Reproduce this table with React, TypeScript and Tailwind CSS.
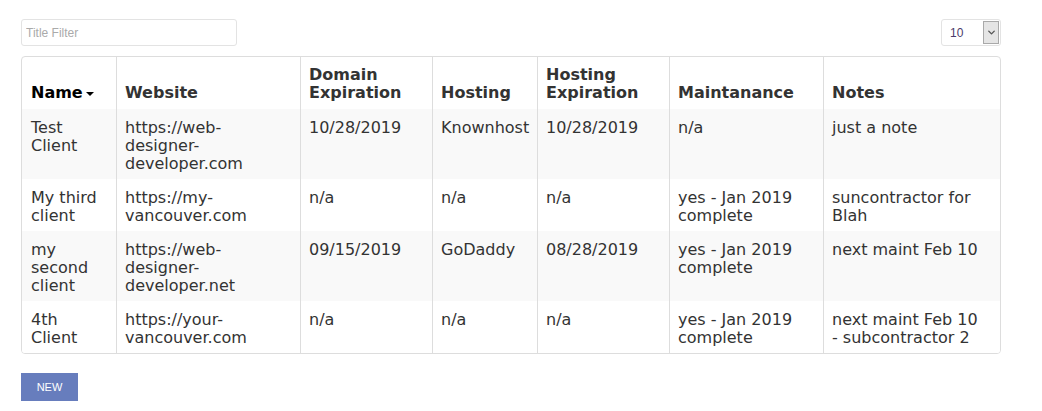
import { ChevronDown } from 'lucide-react';

interface Client {
  name: string;
  website: string;
  domainExp: string;
  hosting: string;
  hostingExp: string;
  maint: string;
  notes: string;
}

const CLIENTS: Client[] = [
  {
    name: 'Test Client',
    website: 'https://web-designer-developer.com',
    domainExp: '10/28/2019',
    hosting: 'Knownhost',
    hostingExp: '10/28/2019',
    maint: 'n/a',
    notes: 'just a note',
  },
  {
    name: 'My third client',
    website: 'https://my-vancouver.com',
    domainExp: 'n/a',
    hosting: 'n/a',
    hostingExp: 'n/a',
    maint: 'yes - Jan 2019 complete',
    notes: 'suncontractor for Blah',
  },
  {
    name: 'my second client',
    website: 'https://web-designer-developer.net',
    domainExp: '09/15/2019',
    hosting: 'GoDaddy',
    hostingExp: '08/28/2019',
    maint: 'yes - Jan 2019 complete',
    notes: 'next maint Feb 10',
  },
  {
    name: '4th Client',
    website: 'https://your-vancouver.com',
    domainExp: 'n/a',
    hosting: 'n/a',
    hostingExp: 'n/a',
    maint: 'yes - Jan 2019 complete',
    // wraps before the dash in the original
    notes: 'next maint Feb 10\n- subcontractor 2',
  },
];

const HEADERS = ['Website', 'Domain Expiration', 'Hosting', 'Hosting Expiration', 'Maintanance', 'Notes'];

const GRID = 'grid grid-cols-[94px_184px_132px_105px_132px_154px_177px]';

export default function App() {
  return (
    <div
      className="min-h-[411px] bg-white pt-[19px] pl-[21px] text-[#333]"
      style={{ fontFamily: '"DejaVu Sans", Verdana, sans-serif' }}
    >
      <div className="flex w-[980px] items-start justify-between">
        <input
          type="text"
          placeholder="Title Filter"
          className="h-[27px] w-[216px] rounded-[3px] border border-[#e3e3e3] px-[4px] text-[12px] text-[#333] outline-none placeholder:text-[#aaa]"
          style={{ fontFamily: '"Liberation Sans", Arial, sans-serif' }}
        />
        <div
          className="flex h-[27px] w-[60px] items-center justify-between rounded-[3px] border border-[#e3e3e3] pl-[8px] pr-[1px] text-[12px] text-[#4a3a6a]"
          style={{ fontFamily: '"Liberation Sans", Arial, sans-serif' }}
        >
          <span>10</span>
          <span className="flex h-[23px] w-[16px] items-center justify-center border border-[#a9a9a9] bg-[#e5e5e5]">
            <ChevronDown size={11} strokeWidth={3} className="text-[#555]" />
          </span>
        </div>
      </div>

      <div className="mt-[10px] w-[980px] overflow-hidden rounded-[4px] border border-[#dddddd] text-[16px] leading-[18px]">
        <div className={`${GRID} font-bold`}>
          <div className="flex items-end pl-[9px] pr-2 pt-[9px] pb-[7px] text-black">
            <span>Name</span>
            <span className="mb-[6px] ml-[3px] h-0 w-0 border-x-[4px] border-t-[4px] border-x-transparent border-t-black" />
          </div>
          {HEADERS.map(h => (
            <div key={h} className="flex items-end border-l border-[#dddddd] pl-2 pr-[7px] pt-[9px] pb-[7px]">
              <span>{h}</span>
            </div>
          ))}
        </div>
        {CLIENTS.map((c, i) => {
          const cells = [c.website, c.domainExp, c.hosting, c.hostingExp, c.maint, c.notes];
          return (
            <div key={c.name} className={`${GRID} ${i % 2 === 0 ? 'bg-[#f9f9f9]' : 'bg-white'}`}>
              <div className="pl-[9px] pr-2 pt-[10px] pb-[6px] break-words">{c.name}</div>
              {cells.map((v, j) => (
                <div
                  key={j}
                  className="border-l border-[#dddddd] pl-2 pr-[7px] pt-[10px] pb-[6px] break-words whitespace-pre-line"
                >
                  {v}
                </div>
              ))}
            </div>
          );
        })}
      </div>

      <button
        className="mt-[19px] h-[28px] w-[57px] bg-[#677dbd] text-[11px] text-white"
        style={{ fontFamily: '"Liberation Sans", Arial, sans-serif' }}
      >
        NEW
      </button>
    </div>
  );
}
